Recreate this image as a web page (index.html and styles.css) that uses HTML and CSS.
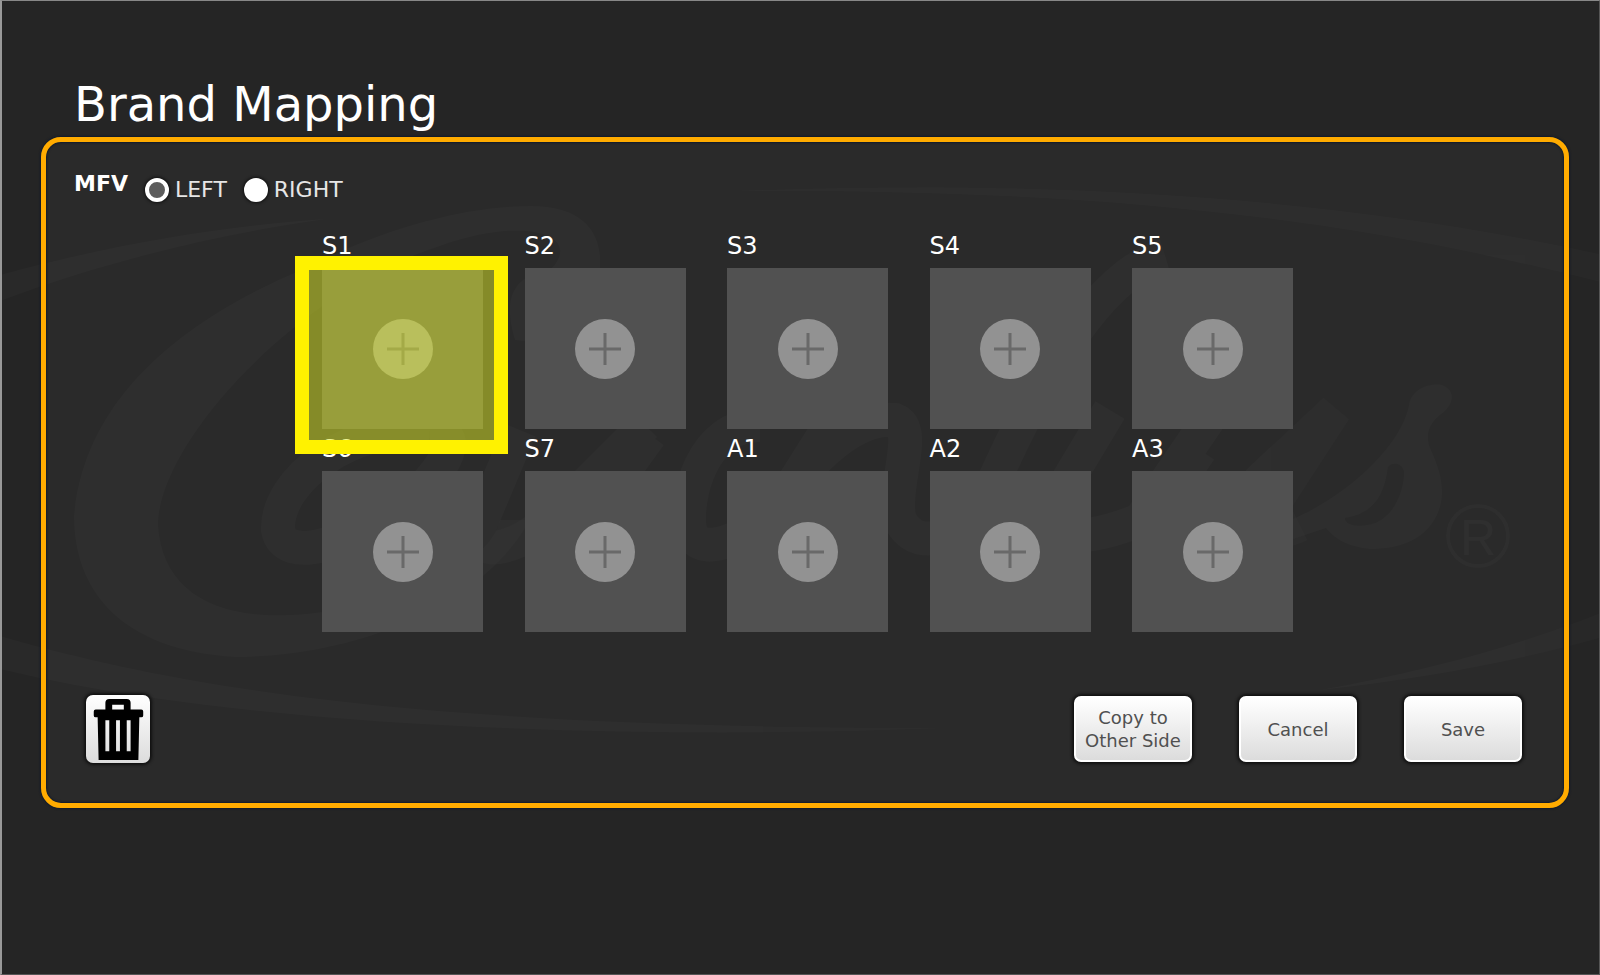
FILE: index.html
```html
<!DOCTYPE html>
<html lang="en">
<head>
  <meta charset="utf-8">
  <title>Brand Mapping</title>
  <link rel="stylesheet" href="styles.css">
</head>
<body>

<svg class="watermark" viewBox="0 0 1600 975" preserveAspectRatio="xMidYMid slice" aria-hidden="true">
  <g class="watermark-fill">
    <!-- swooshes -->
    <path d="M0 275 C110 245 220 226 326 219 C220 234 110 260 0 301 Z"/>
    <path d="M735 191 C1000 180 1310 190 1600 254 L1600 282 C1310 208 1050 190 735 191 Z"/>
    <path d="M0 636 C200 694 450 728 950 728 C650 740 250 730 0 669 Z"/>
    <path d="M1600 613 C1520 645 1430 670 1320 690 C1430 678 1520 660 1600 638 Z"/>
    <!-- capital C -->
    <path d="M515 340 C500 290 520 275 550 270 C585 235 525 215 440 246 C300 290 160 440 158 524 C162 600 230 625 322 612 C430 590 490 560 500 520 L530 520 C480 610 350 657 235 657 C120 650 74 590 74 516 C84 400 180 320 306 268 C390 225 470 206 531 206 C590 206 605 240 599 275 C590 330 550 345 515 340 Z"/>
    <!-- s -->
    <path d="M1290 520 C1340 500 1400 450 1409 405 C1412 388 1430 383 1442 385 C1456 390 1455 405 1440 415 C1426 426 1426 440 1431 450 C1440 470 1446 490 1439 510 C1428 540 1400 549 1370 549 C1350 547 1335 540 1326 528 L1290 540 Z M1388 467 C1384 500 1370 514 1345 518 C1345 526 1360 528 1375 523 C1395 515 1404 490 1404 472 C1402 462 1392 462 1388 467 Z" fill-rule="evenodd"/>
  </g>
  <g class="watermark-line">
    <path d="M430 430 C350 425 276 480 278 530 C284 565 350 545 410 500 C455 460 460 430 430 430"/>
    <path d="M520 430 L478 530 C476 560 520 550 560 510 L645 425"/>
    <path d="M650 435 L560 560 M760 425 C700 425 685 500 690 530 C700 565 760 530 790 500"/>
    <path d="M830 425 L745 560 M760 530 C800 470 850 415 895 420 C920 430 890 490 900 520 C920 560 970 530 1020 480"/>
    <path d="M1165 255 C1080 280 1010 440 960 560"/>
    <path d="M1110 410 L1050 510 C1040 545 1090 540 1140 520 L1215 410 M1200 450 L1160 510 C1160 550 1220 530 1260 480 L1335 410 L1270 510 C1265 530 1280 535 1300 525"/>
  </g>
  <circle class="watermark-ring" cx="1478" cy="536" r="30"/>
  <text class="watermark-mark" x="1478" y="555">R</text>
</svg>

<main class="screen">
  <h1 class="title">Brand Mapping</h1>

  <form class="frame">
    <fieldset class="sides">
      <legend class="sides-legend">
        MFV
      </legend>
      <label class="side"><input type="radio" name="side" value="left" checked>LEFT</label>
      <label class="side"><input type="radio" name="side" value="right">RIGHT</label>
    </fieldset>

    <div class="slots" id="slots"></div>

    <div class="actions">
      <button type="button" class="trash" aria-label="Delete">
        <svg viewBox="0 0 66 70" width="64" height="68" aria-hidden="true">
          <path fill-rule="evenodd" d="M20 15 V8 Q20 4 24 4 H42 Q46 4 46 8 V15 H57 Q59 15 59 17 V21 Q59 23 57 23 H55 L54 67 H13 L12 23 H10 Q8 23 8 21 V17 Q8 15 10 15 Z M27 10 V15 H39 V10 Z M20 26 V58 H24 V26 Z M31 26 V58 H35 V26 Z M42 26 V58 H46 V26 Z"/>
        </svg>
      </button>
      <button type="button" class="btn">Copy to<br>Other Side</button>
      <button type="button" class="btn">Cancel</button>
      <button type="button" class="btn">Save</button>
    </div>
  </form>
</main>

<script>
  const slots = ["S1", "S2", "S3", "S4", "S5", "S6", "S7", "A1", "A2", "A3"];
  const selected = "S1";

  const plus = `<svg class="plus" viewBox="0 0 60 60" aria-hidden="true">
    <circle cx="30" cy="30" r="30"/>
    <path d="M14 30 H46 M30 14 V46"/>
  </svg>`;

  document.getElementById("slots").innerHTML = slots.map((name) => `
    <div class="slot">
      <label class="slot-name" for="slot-${name}">${name}</label>
      <button type="button" class="tile ${name === selected ? "selected" : ""}" id="slot-${name}">${plus}</button>
    </div>`).join("");
</script>

</body>
</html>
```

FILE: styles.css
```css
* {
  box-sizing: border-box;
}

body {
  margin: 0;
  background: #252525;
  color: #fff;
  font-family: "DejaVu Sans", Verdana, sans-serif;
}

.watermark {
  position: absolute;
  top: 0;
  left: 0;
  width: 100%;
  height: 100%;
}

.watermark-fill,
.watermark-line {
  opacity: 0.016;
}

.watermark-fill {
  fill: #fff;
}

.watermark-line {
  fill: none;
  stroke: #fff;
  stroke-width: 34;
}

.watermark-ring {
  fill: none;
  stroke: #fff;
  stroke-width: 4;
  opacity: 0.02;
}

.watermark-mark {
  fill: #fff;
  font-family: "Liberation Sans", Arial, sans-serif;
  font-size: 50px;
  text-anchor: middle;
  opacity: 0.02;
}

.screen {
  position: relative;
  min-height: 100vh;
  padding: 75px 30px 20px 39px;
  border: 1px solid #555;
  border-top-color: #888;
  border-left: 2px solid #999;
}

.title {
  margin: 0 0 5px 33px;
  font-size: 48px;
  font-weight: normal;
  line-height: 56px;
}

.frame {
  padding: 29px 23px 40px 28px;
  border: 5px solid #ffab00;
  border-radius: 20px;
  background: rgba(255, 255, 255, 0.024);
  box-shadow: 0 0 2px 1px #101a2c, inset 0 0 2px 1px #101a2c;
}

.sides {
  display: flex;
  align-items: flex-end;
  height: 32px;
  margin: 0;
  padding: 0;
  border: 0;
  font-size: 22px;
  line-height: 26px;
}

.sides-legend {
  float: left;
  align-self: flex-start;
  height: 32px;
  margin-right: 17px;
  padding: 0;
  font-weight: bold;
}

.side {
  display: flex;
  align-items: center;
  gap: 6px;
  margin-right: 17px;
  color: #e6e6e6;
}

.side input {
  appearance: none;
  width: 24px;
  height: 24px;
  margin: 0;
  border: 4px solid #fff;
  border-radius: 50%;
  background: #fff;
  box-shadow: 0 0 3px 1px #111;
}

.side input:checked {
  background: #5c5c5c;
}

.slots {
  display: grid;
  grid-template-columns: repeat(5, 161px);
  justify-content: space-between;
  row-gap: 7px;
  max-width: 971px;
  margin: 30px auto 63px;
}

.slot-name {
  display: block;
  margin-bottom: 8px;
  font-size: 24px;
  line-height: 27px;
}

.tile {
  position: relative;
  display: flex;
  align-items: center;
  justify-content: center;
  width: 161px;
  height: 161px;
  padding: 0;
  border: 0;
  background: #515151;
}

.tile.selected::after {
  content: "";
  position: absolute;
  z-index: 1;
  top: -12px;
  left: -27px;
  box-sizing: border-box;
  width: 213px;
  height: 198px;
  border: 14px solid #fff200;
  background: rgba(224, 236, 38, 0.5);
  background-clip: padding-box;
}

.plus {
  width: 60px;
  height: 60px;
  fill: #929292;
  stroke: none;
}

.plus path {
  stroke: #696969;
  stroke-width: 3;
}

.actions {
  display: flex;
  align-items: center;
  gap: 47px;
  padding: 0 19px 0 12px;
}

.btn,
.trash {
  border: 2px solid #fff;
  border-radius: 7px;
  background: linear-gradient(#fff, #dcdcdc);
  box-shadow: 0 0 3px 2px #111;
}

.btn {
  width: 118px;
  height: 66px;
  padding: 0;
  color: #505050;
  font-family: inherit;
  font-size: 18px;
  line-height: 23px;
}

.trash {
  display: flex;
  width: 64px;
  height: 68px;
  margin-right: auto;
  padding: 0;
  border: 0;
}
```
